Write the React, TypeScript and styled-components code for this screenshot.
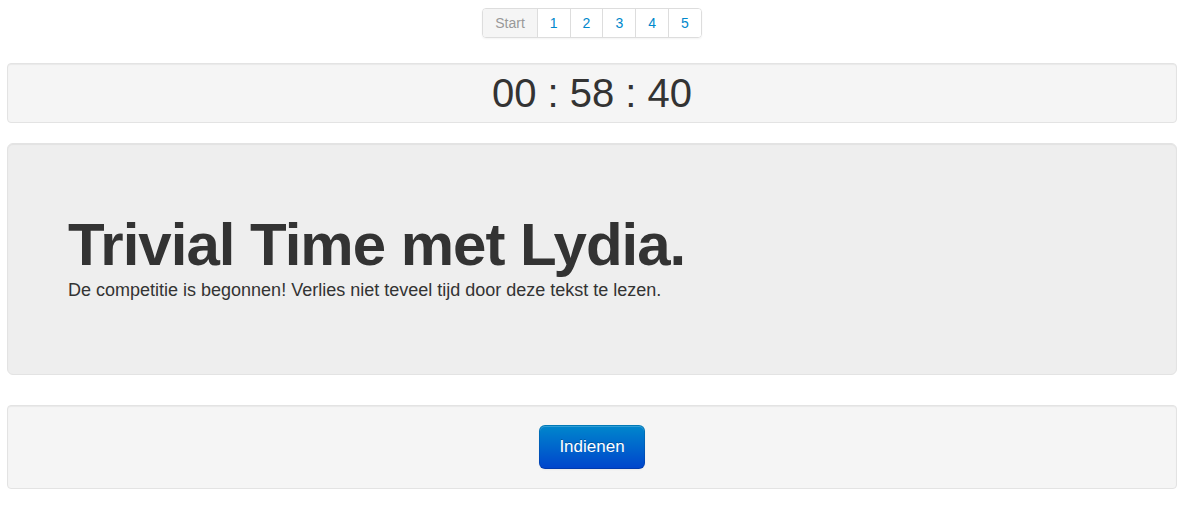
import React from "react";
import styled, { createGlobalStyle } from "styled-components";

const GlobalStyle = createGlobalStyle`
  *, *::before, *::after { box-sizing: border-box; }
  body {
    margin: 0;
    background: #fff;
    color: #333;
    font-family: "Liberation Sans", Arial, sans-serif;
    font-size: 14px;
    line-height: 20px;
  }
`;

const Page = styled.main`
  padding: 8px 12px 0 7px;
`;

const Pagination = styled.nav`
  display: flex;
  justify-content: center;
  margin-bottom: 25px;
`;

const PageList = styled.ul`
  display: flex;
  margin: 0;
  padding: 0;
  list-style: none;
  border: 1px solid #ddd;
  border-radius: 4px;
  overflow: hidden;
  box-shadow: 0 1px 2px rgba(0, 0, 0, 0.05);
`;

const PageItem = styled.li`
  & + & { border-left: 1px solid #ddd; }
`;

const PageLink = styled.a<{ $active?: boolean }>`
  display: block;
  padding: 4px 12px;
  text-decoration: none;
  color: ${(p) => (p.$active ? "#999" : "#08c")};
  background: ${(p) => (p.$active ? "#f5f5f5" : "#fff")};
`;

const Well = styled.section<{ $padding: string }>`
  padding: ${(p) => p.$padding};
  text-align: center;
  background: #f5f5f5;
  border: 1px solid #e3e3e3;
  border-radius: 4px;
  box-shadow: inset 0 1px 1px rgba(0, 0, 0, 0.05);
`;

const Timer = styled.time`
  display: block;
  font-size: 40px;
  line-height: 40px;
`;

const Hero = styled.section`
  margin: 20px 0 30px;
  padding: 71px 60px 69px;
  background: #eee;
  border: 1px solid #e3e3e3;
  border-radius: 6px;
  box-shadow: inset 0 1px 1px rgba(0, 0, 0, 0.05);
`;

const Title = styled.h1`
  margin: 0;
  font-size: 60px;
  line-height: 60px;
  letter-spacing: -1px;
`;

const Intro = styled.p`
  margin: 0;
  font-size: 18px;
  line-height: 30px;
`;

const SubmitButton = styled.button`
  padding: 11px 19px;
  font-family: inherit;
  font-size: 17px;
  line-height: 20px;
  color: #fff;
  text-shadow: 0 -1px 0 rgba(0, 0, 0, 0.25);
  background: linear-gradient(#08c, #04c);
  border: 1px solid;
  border-color: rgba(0, 0, 0, 0.1) rgba(0, 0, 0, 0.1) rgba(0, 0, 0, 0.15);
  background-origin: border-box;
  border-radius: 6px;
  box-shadow: inset 0 1px 0 rgba(255, 255, 255, 0.2), 0 1px 2px rgba(0, 0, 0, 0.05);
  cursor: pointer;
`;

const pages = ["Start", "1", "2", "3", "4", "5"];

export default function App() {
  return (
    <>
      <GlobalStyle />
      <Page>
        <Pagination aria-label="Vragen">
          <PageList>
            {pages.map((page, i) => (
              <PageItem key={page}>
                <PageLink href="#" $active={i === 0} aria-current={i === 0 ? "page" : undefined}>
                  {page}
                </PageLink>
              </PageItem>
            ))}
          </PageList>
        </Pagination>
        <Well $padding="9px">
          <Timer>00 : 58 : 40</Timer>
        </Well>
        <Hero>
          <Title>Trivial Time met Lydia.</Title>
          <Intro>De competitie is begonnen! Verlies niet teveel tijd door deze tekst te lezen.</Intro>
        </Hero>
        <Well $padding="19px">
          <SubmitButton type="submit">Indienen</SubmitButton>
        </Well>
      </Page>
    </>
  );
}
